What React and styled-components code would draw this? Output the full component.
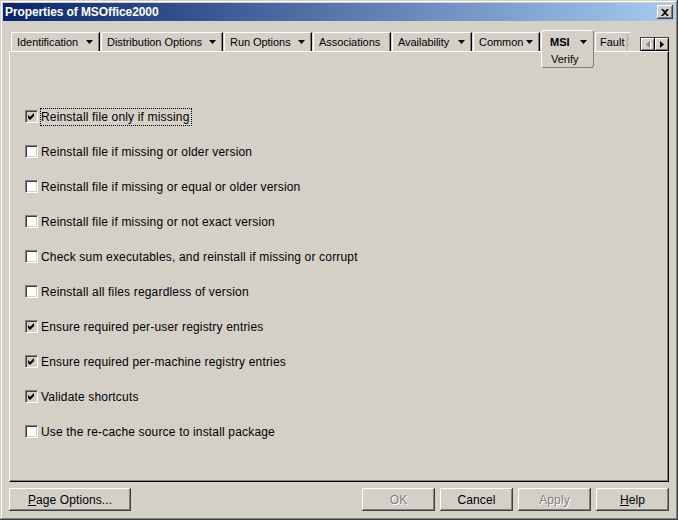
import styled, { createGlobalStyle } from "styled-components";

const GlobalStyle = createGlobalStyle`
  html, body {
    margin: 0;
    padding: 0;
    background: #d4d0c8;
  }
  body {
    font-family: "Liberation Sans", Arial, sans-serif;
  }
`;

const tabs = [
  { label: "Identification", width: 89 },
  { label: "Distribution Options", width: 122 },
  { label: "Run Options", width: 88 },
  { label: "Associations", width: 78, noArrow: true },
  { label: "Availability", width: 80 },
  { label: "Common", width: 67 },
];

const options = [
  { label: "Reinstall file only if missing", checked: true, focused: true },
  { label: "Reinstall file if missing or older version" },
  { label: "Reinstall file if missing or equal or older version" },
  { label: "Reinstall file if missing or not exact version" },
  { label: "Check sum executables, and reinstall if missing or corrupt" },
  { label: "Reinstall all files regardless of version" },
  { label: "Ensure required per-user registry entries", checked: true },
  { label: "Ensure required per-machine registry entries", checked: true },
  { label: "Validate shortcuts", checked: true },
  { label: "Use the re-cache source to install package" },
];

const DownArrow = () => (
  <svg width="7" height="4" viewBox="0 0 7 4">
    <polygon points="0,0 7,0 3.5,4" fill="#000" />
  </svg>
);

const CheckMark = () => (
  <svg width="7" height="7" viewBox="0 0 7 7">
    <path d="M0 2 L2 4 L6 0 L6 3 L2 7 L0 5 Z" fill="#000" />
  </svg>
);

const SideArrow = ({ dir, disabled }) => (
  <svg width="5" height="8" viewBox="0 0 5 8">
    {disabled && (
      <polygon
        points={dir === "left" ? "5,1 5,8 1,4.5" : "1,1 1,8 5,4.5"}
        fill="#fff"
      />
    )}
    <polygon
      points={dir === "left" ? "4,0 4,7 0,3.5" : "0,0 0,7 4,3.5"}
      fill={disabled ? "#808080" : "#000"}
    />
  </svg>
);

export default function App() {
  return (
    <>
      <GlobalStyle />
      <Window>
        <TitleBar>
          <Title>Properties of MSOffice2000</Title>
          <CloseButton>
            <svg width="8" height="7" viewBox="0 0 8 7">
              <path
                d="M0 0 L2 0 L4 2 L6 0 L8 0 L5 3.5 L8 7 L6 7 L4 5 L2 7 L0 7 L3 3.5 Z"
                fill="#000"
              />
            </svg>
          </CloseButton>
        </TitleBar>

        <Body>
          <TabStrip>
            {tabs.map((t) => (
              <Tab key={t.label} $width={t.width}>
                <span>{t.label}</span>
                {!t.noArrow && <DownArrow />}
              </Tab>
            ))}
            <ActiveTab>
              <ActiveHead>
                <b>MSI</b>
                <DownArrow />
              </ActiveHead>
              <SubPage>Verify</SubPage>
            </ActiveTab>
            <CutTab>
              <span>Fault</span>
              <Tear width="5" height="16" viewBox="0 0 5 16">
                <path
                  d="M2.5 0 C0.5 2, 4.5 4, 2.5 6 C0.5 8, 4.5 10, 2.5 12 C0.5 14, 2.5 15, 2.5 16"
                  stroke="#9a9a9a"
                  fill="none"
                />
              </Tear>
            </CutTab>
            <ScrollGroup>
              <ScrollButton>
                <SideArrow dir="left" disabled />
              </ScrollButton>
              <ScrollButton>
                <SideArrow dir="right" />
              </ScrollButton>
            </ScrollGroup>
          </TabStrip>

          <Panel>
            {options.map((o) => (
              <OptionRow key={o.label}>
                <CheckBox $checked={o.checked}>{o.checked && <CheckMark />}</CheckBox>
                <OptionLabel $focused={o.focused}>{o.label}</OptionLabel>
              </OptionRow>
            ))}
          </Panel>

          <ButtonBar>
            <PushButton $width={122}>
              <u>P</u>age Options...
            </PushButton>
            <ButtonGroup>
              <PushButton disabled>OK</PushButton>
              <PushButton>Cancel</PushButton>
              <PushButton disabled>Apply</PushButton>
              <PushButton>
                <u>H</u>elp
              </PushButton>
            </ButtonGroup>
          </ButtonBar>
        </Body>
      </Window>
    </>
  );
}

const Window = styled.div`
  width: 678px;
  height: 520px;
  box-sizing: border-box;
  padding: 3px;
  background: #d4d0c8;
  box-shadow: inset -1px -1px #404040, inset 1px 1px #d4d0c8,
    inset -2px -2px #808080, inset 2px 2px #ffffff;
  display: flex;
  flex-direction: column;
  font-family: "Liberation Sans", Arial, sans-serif;
  color: #000;
`;

const TitleBar = styled.div`
  height: 18px;
  flex-shrink: 0;
  display: flex;
  align-items: center;
  justify-content: space-between;
  padding: 0 2px;
  background: linear-gradient(to right, #0a246a, #a6caf0);
`;

const Title = styled.span`
  color: #fff;
  font-weight: bold;
  font-size: 12px;
  letter-spacing: -0.1px;
`;

const CloseButton = styled.div`
  width: 16px;
  height: 14px;
  box-sizing: border-box;
  display: flex;
  align-items: center;
  justify-content: center;
  background: #d4d0c8;
  box-shadow: inset -1px -1px #404040, inset 1px 1px #ffffff,
    inset -2px -2px #808080;
`;

const Body = styled.div`
  flex: 1;
  display: flex;
  flex-direction: column;
  padding: 9px 6px 6px;
`;

const TabStrip = styled.div`
  height: 21px;
  flex-shrink: 0;
  display: flex;
  align-items: flex-end;
  gap: 1px;
  padding-left: 2px;
  position: relative;
  z-index: 1;
`;

const Tab = styled.div`
  width: ${(p) => p.$width}px;
  height: 19px;
  box-sizing: border-box;
  flex-shrink: 0;
  display: flex;
  align-items: center;
  justify-content: space-between;
  padding: 0 6px 1px 5px;
  font-size: 11px;
  letter-spacing: -0.05px;
  white-space: nowrap;
  border-top: 1px solid #fff;
  border-left: 1px solid #fff;
  border-right: 1px solid #000;
  border-top-left-radius: 2px;
  box-shadow: inset -1px 0 #808080;
`;

const ActiveTab = styled.div`
  width: 53px;
  height: 38px;
  box-sizing: border-box;
  flex-shrink: 0;
  align-self: flex-start;
  margin-bottom: -17px;
  display: flex;
  flex-direction: column;
  padding: 0 6px 0 8px;
  background: #d4d0c8;
  border: 1px solid;
  border-color: #ffffff #808080 #808080 #ffffff;
  border-radius: 3px;
  font-size: 11px;
`;

const ActiveHead = styled.div`
  height: 21px;
  display: flex;
  align-items: center;
  justify-content: space-between;
  b {
    font-size: 11px;
  }
`;

const SubPage = styled.div`
  height: 14px;
  line-height: 14px;
  font-size: 11px;
  padding-left: 1px;
`;

const CutTab = styled.div`
  width: 35px;
  height: 19px;
  box-sizing: border-box;
  flex-shrink: 0;
  display: flex;
  align-items: center;
  gap: 1px;
  padding: 0 0 1px 4px;
  overflow: hidden;
  font-size: 11px;
  white-space: nowrap;
  border-top: 1px solid #fff;
  border-left: 1px solid #fff;
  border-top-left-radius: 2px;
`;

const Tear = styled.svg`
  flex-shrink: 0;
`;

const ScrollGroup = styled.div`
  margin-left: auto;
  display: flex;
  border-top: 1px solid #404040;
  border-left: 1px solid #404040;
`;

const ScrollButton = styled.div`
  width: 14px;
  height: 13px;
  display: flex;
  align-items: center;
  justify-content: center;
  background: #d4d0c8;
  box-shadow: inset -1px -1px #000000, inset 1px 1px #ffffff,
    inset -2px -2px #808080;
`;

const Panel = styled.div`
  height: 431px;
  box-sizing: border-box;
  flex-shrink: 0;
  padding: 47px 0 0 15px;
  border-top: 1px solid #fff;
  border-left: 1px solid #fff;
  border-right: 1px solid #000;
  border-bottom: 1px solid #000;
  box-shadow: inset -1px -1px #808080;
`;

const OptionRow = styled.div`
  height: 35px;
  display: flex;
  align-items: center;
`;

const CheckBox = styled.div`
  width: 13px;
  height: 13px;
  box-sizing: border-box;
  display: flex;
  align-items: center;
  justify-content: center;
  background: ${(p) => (p.$checked ? "#d4d0c8" : "#ffffff")};
  border: 1px solid;
  border-color: #808080 #ffffff #ffffff #808080;
  box-shadow: inset 1px 1px #404040, inset -1px -1px #d4d0c8;
`;

const OptionLabel = styled.span`
  margin-left: 2px;
  padding: 0 1px 0 0;
  line-height: 16px;
  font-size: 12px;
  letter-spacing: 0.17px;
  border: 1px dotted ${(p) => (p.$focused ? "#000" : "transparent")};
`;

const ButtonBar = styled.div`
  margin-top: 6px;
  display: flex;
  justify-content: space-between;
`;

const ButtonGroup = styled.div`
  display: flex;
  gap: 5px;
`;

const PushButton = styled.button`
  width: ${(p) => p.$width || 73}px;
  height: 23px;
  padding: 0;
  border: none;
  background: #d4d0c8;
  font-family: "Liberation Sans", Arial, sans-serif;
  font-size: 12px;
  letter-spacing: 0.1px;
  color: #000;
  box-shadow: inset -1px -1px #404040, inset 1px 1px #ffffff,
    inset -2px -2px #808080, inset 2px 2px #d4d0c8;

  &:disabled {
    color: #808080;
    text-shadow: 1px 1px #ffffff;
  }
`;
